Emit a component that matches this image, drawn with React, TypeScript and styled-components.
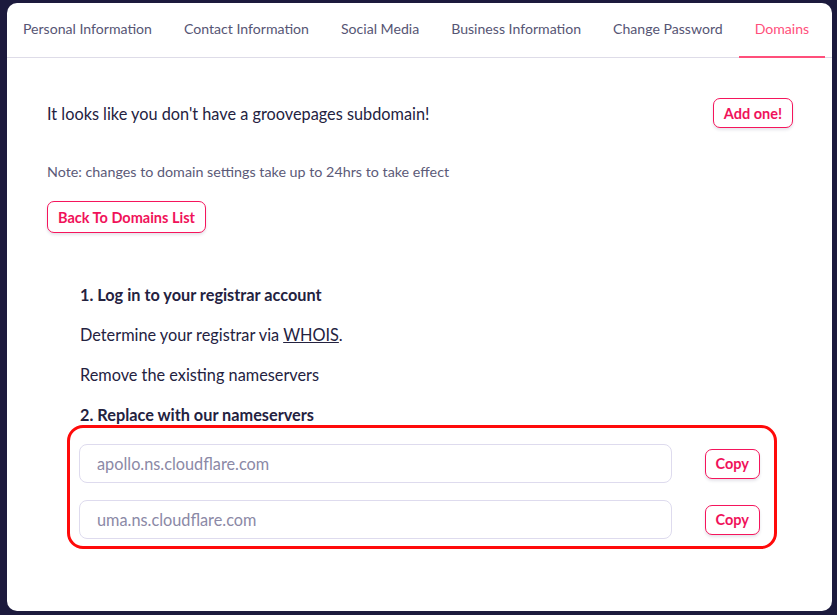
import React from 'react';
import styled, { createGlobalStyle, css } from 'styled-components';

const GlobalStyle = createGlobalStyle`
  html, body {
    margin: 0;
    padding: 0;
    background-color: #1c1a3d;
    font-family: Lato, "Noto Sans", sans-serif;
  }
`

const Page = styled.div`
  box-sizing: border-box;
  width: 837px;
  height: 615px;
  padding: 3px 5px 4px 7px;
`

const Card = styled.section`
  height: 608px;
  background-color: #fff;
  border-radius: 10px;
  overflow: hidden;
`

const TabBar = styled.nav`
  display: flex;
  height: 54px;
  border-bottom: 1px solid #dedce8;
`

const Tab = styled.div<{ active?: boolean }>`
  box-sizing: border-box;
  flex-shrink: 0;
  padding: 0 16px;
  height: 55px;
  line-height: 52px;
  font-size: 14.1px;
  color: #565574;
  white-space: nowrap;

  ${(props) => props.active && css`
    color: #ff4f7b;
    border-bottom: 2px solid #ff4f7b;
  `}
`

const Content = styled.main`
  padding: 40px 39px 0 40px;
  color: #24223f;
`

const NoticeRow = styled.div`
  display: flex;
  justify-content: space-between;
  align-items: center;
  font-size: 16.3px;
`

const PinkButton = styled.button<{ small?: boolean }>`
  outline: none;
  cursor: pointer;
  box-sizing: border-box;
  height: ${(props) => (props.small ? '30px' : '32px')};
  padding: 0 10px;
  background-color: #fff;
  border: 1px solid #f5155c;
  border-radius: 7px;
  color: #f0125a;
  font-family: Lato, "Noto Sans", sans-serif;
  font-size: 14.5px;
  font-weight: 700;
  box-shadow: 0 2px 3px rgba(40, 30, 80, 0.12);
  white-space: nowrap;
`

const Note = styled.p`
  margin: 35px 0 0;
  font-size: 14.3px;
  line-height: 18px;
  color: #5b5a78;
`

const BackRow = styled.div`
  margin-top: 20px;
`

const Steps = styled.div`
  margin-top: 52px;
  padding-left: 33px;
`

const StepTitle = styled.div`
  font-size: 16.3px;
  line-height: 20px;
  font-weight: 700;
  margin-top: 20px;

  &:first-child {
    margin-top: 0;
  }
`

const StepText = styled.div`
  font-size: 16.3px;
  line-height: 20px;
  margin-top: 20px;
`

const Link = styled.a`
  color: #24223f;
  text-decoration: underline;
`

const Highlight = styled.div`
  margin: 0 0 0 -13px;
  width: 710px;
  box-sizing: border-box;
  padding: 16px 14px 7px 9px;
  border: 3px solid #ff0a0a;
  border-radius: 16px;
`

const ServerRow = styled.div`
  display: flex;
  align-items: center;
  gap: 33px;
  margin-bottom: 17px;

  &:last-child {
    margin-bottom: 0;
  }
`

const ServerInput = styled.input`
  flex: 1;
  box-sizing: border-box;
  height: 39px;
  padding: 0 17px;
  border: 1px solid #dedbee;
  border-radius: 8px;
  font-family: Lato, "Noto Sans", sans-serif;
  font-size: 16.3px;
  color: #24223f;
  outline: none;

  &::placeholder {
    color: #8b89a6;
  }
`

const tabs = [
  'Personal Information',
  'Contact Information',
  'Social Media',
  'Business Information',
  'Change Password',
  'Domains',
];

const nameservers = ['apollo.ns.cloudflare.com', 'uma.ns.cloudflare.com'];

const App: React.FC = () => {
  return (
    <Page>
      <GlobalStyle />
      <Card>
        <TabBar>
          {tabs.map((tab) => (
            <Tab key={tab} active={tab === 'Domains'}>{tab}</Tab>
          ))}
        </TabBar>
        <Content>
          <NoticeRow>
            <span>It looks like you don't have a groovepages subdomain!</span>
            <PinkButton small>Add one!</PinkButton>
          </NoticeRow>
          <Note>Note: changes to domain settings take up to 24hrs to take effect</Note>
          <BackRow>
            <PinkButton>Back To Domains List</PinkButton>
          </BackRow>
          <Steps>
            <StepTitle>1. Log in to your registrar account</StepTitle>
            <StepText>Determine your registrar via <Link href="#">WHOIS</Link>.</StepText>
            <StepText>Remove the existing nameservers</StepText>
            <StepTitle>2. Replace with our nameservers</StepTitle>
            <Highlight>
              {nameservers.map((ns) => (
                <ServerRow key={ns}>
                  <ServerInput placeholder={ns} readOnly />
                  <PinkButton small>Copy</PinkButton>
                </ServerRow>
              ))}
            </Highlight>
          </Steps>
        </Content>
      </Card>
    </Page>
  );
}

export default App;
